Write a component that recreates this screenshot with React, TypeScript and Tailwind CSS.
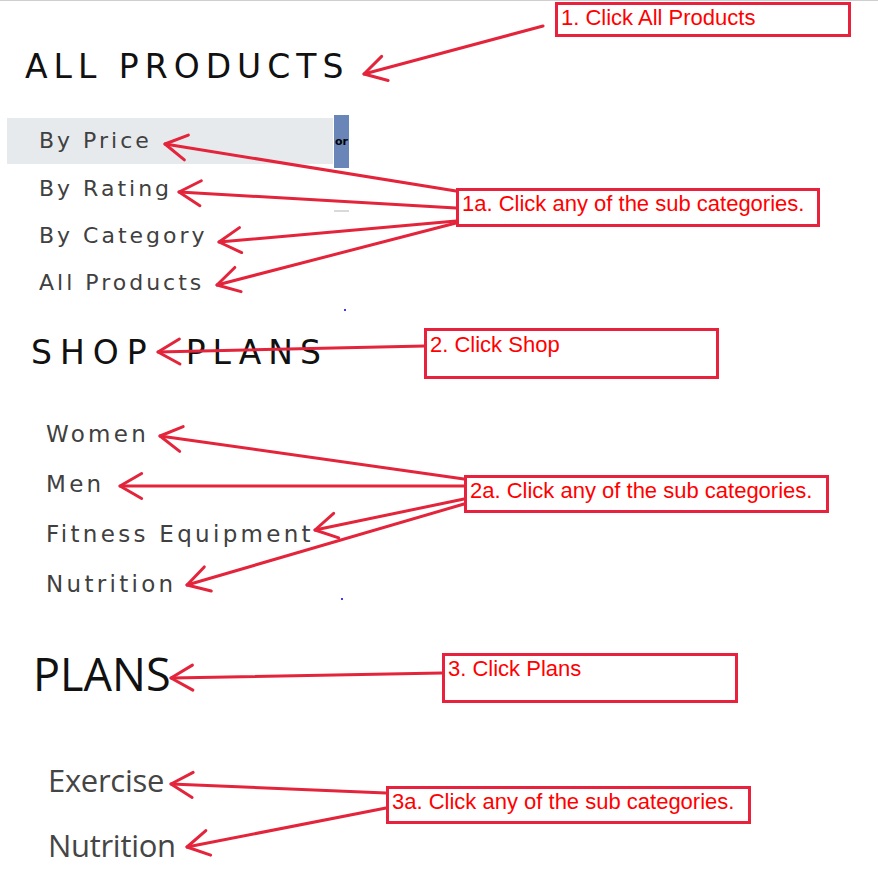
import React from "react";

const RED = "#e3243b";

type Line = { x1: number; y1: number; x2: number; y2: number };

// tail (x1,y1) -> tip (x2,y2)
const ARROWS: Line[] = [
  { x1: 543, y1: 25, x2: 364, y2: 73 },
  { x1: 456, y1: 190, x2: 165, y2: 143 },
  { x1: 456, y1: 207, x2: 179, y2: 191 },
  { x1: 456, y1: 220, x2: 219, y2: 241 },
  { x1: 456, y1: 222, x2: 217, y2: 284 },
  { x1: 425, y1: 345, x2: 158, y2: 351 },
  { x1: 464, y1: 478, x2: 160, y2: 435 },
  { x1: 464, y1: 485, x2: 120, y2: 485 },
  { x1: 464, y1: 498, x2: 315, y2: 529 },
  { x1: 464, y1: 503, x2: 187, y2: 584 },
  { x1: 442, y1: 672, x2: 171, y2: 677 },
  { x1: 386, y1: 792, x2: 171, y2: 783 },
  { x1: 386, y1: 807, x2: 187, y2: 846 },
];

function Arrow({ x1, y1, x2, y2 }: Line) {
  const a = Math.atan2(y1 - y2, x1 - x2);
  const len = 25;
  const s = Math.PI / 6;
  const b1 = [x2 + len * Math.cos(a - s), y2 + len * Math.sin(a - s)];
  const b2 = [x2 + len * Math.cos(a + s), y2 + len * Math.sin(a + s)];
  return (
    <g>
      <line x1={x1} y1={y1} x2={x2} y2={y2} />
      <polyline points={`${b1[0]},${b1[1]} ${x2},${y2} ${b2[0]},${b2[1]}`} fill="none" />
    </g>
  );
}

function Note({ text, className }: { text: string; className: string }) {
  return (
    <div
      className={`absolute border-[3px] border-[#e8213c] bg-white pl-[3px] font-['Liberation_Sans',Arial,sans-serif] text-[22px] leading-[1.15] whitespace-nowrap text-[#ff0000] ${className}`}
    >
      {text}
    </div>
  );
}

const subA = "h-[47px] leading-[47px] pl-[39px] font-['DejaVu_Sans',sans-serif] text-[22px] tracking-[3px] text-[#404040]";
const subB = "h-[50px] leading-[50px] pl-[46px] font-['DejaVu_Sans',sans-serif] text-[23px] tracking-[3.3px] text-[#404040]";
const subC = "h-[65px] leading-[65px] pl-[48px] font-['Open_Sans',sans-serif] text-[31px] tracking-[-0.3px] text-[#454545]";

export default function App() {
  return (
    <div className="relative h-[884px] w-[878px] overflow-hidden border-t border-[#cfcfcf] bg-white">
      <div className="flex flex-col">
        <div className="mt-[46px] h-[40px] pl-[25px] font-['DejaVu_Sans',sans-serif] text-[33px] leading-[40px] tracking-[6px] text-[#111]">
          ALL PRODUCTS
        </div>

        <div className="mt-[31px] flex flex-col">
          <div className="relative h-[47px]">
            <div className="ml-[7px] h-[46px] w-[326px] bg-[#e7eaed] pl-[32px] font-['DejaVu_Sans',sans-serif] text-[22px] leading-[46px] tracking-[3px] text-[#404040]">
              By Price
            </div>
            <div className="absolute left-[334px] top-[-3px] flex h-[53px] w-[15px] items-center justify-center bg-[#6a86b9]">
              <span className="font-['DejaVu_Sans',sans-serif] text-[11px] font-bold leading-none text-black">or</span>
            </div>
          </div>
          <div className={subA}>By Rating</div>
          <div className={subA}>By Category</div>
          <div className={subA}>All Products</div>
        </div>

        <div className="mt-[27px] flex h-[40px] items-center font-['DejaVu_Sans',sans-serif] text-[33px] leading-[40px] text-[#111]">
          <span className="pl-[31px] tracking-[8px]">SHOP</span>
          <span className="ml-[31px] tracking-[7px]">PLANS</span>
        </div>

        <div className="mt-[36px] flex flex-col">
          <div className={subB}>Women</div>
          <div className={subB}>Men</div>
          <div className={subB}>Fitness Equipment</div>
          <div className={subB}>Nutrition</div>
        </div>

        <div className="mt-[37px] h-[56px] pl-[33px] font-['Open_Sans',sans-serif] text-[45px] leading-[56px] text-[#111]">
          PLANS
        </div>

        <div className="mt-[46px] flex flex-col">
          <div className={subC}>Exercise</div>
          <div className={subC}>Nutrition</div>
        </div>
      </div>

      {/* stray artifacts */}
      <div className="absolute left-[334px] top-[209px] h-[2px] w-[15px] bg-[#d9d9d9]" />
      <div className="absolute left-[344px] top-[308px] h-[2px] w-[2px] bg-[#3b3bff]" />
      <div className="absolute left-[341px] top-[597px] h-[2px] w-[2px] bg-[#3b3bff]" />

      {/* annotations */}
      <svg
        className="pointer-events-none absolute left-0 top-0"
        width={878}
        height={884}
        stroke={RED}
        strokeWidth={3}
        strokeLinecap="round"
        strokeLinejoin="round"
      >
        {ARROWS.map((a, i) => (
          <Arrow key={i} {...a} />
        ))}
      </svg>

      <Note text="1. Click All Products" className="left-[555px] top-[1px] h-[35px] w-[296px]" />
      <Note text="1a. Click any of the sub categories." className="left-[456px] top-[187px] h-[39px] w-[364px]" />
      <Note text="2. Click Shop" className="left-[424px] top-[327px] h-[51px] w-[295px] pt-px" />
      <Note text="2a. Click any of the sub categories." className="left-[464px] top-[474px] h-[38px] w-[365px]" />
      <Note text="3. Click Plans" className="left-[442px] top-[652px] h-[50px] w-[296px]" />
      <Note text="3a. Click any of the sub categories." className="left-[386px] top-[785px] h-[38px] w-[365px]" />
    </div>
  );
}
